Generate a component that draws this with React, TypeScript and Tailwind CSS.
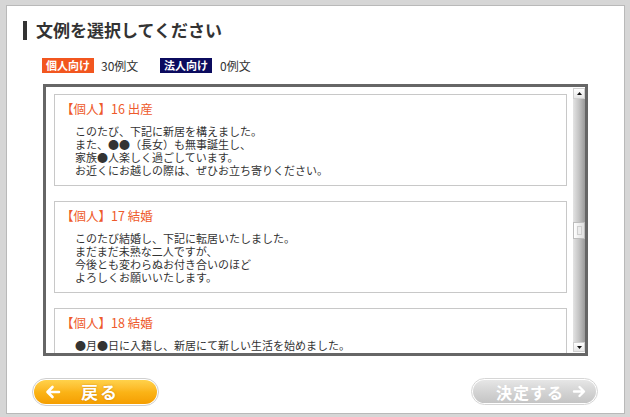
const font = '"Noto Sans CJK JP", "Noto Sans", sans-serif';

interface Sample {
  no: number;
  title: string;
  lines: string[];
}

const samples: Sample[] = [
  {
    no: 16,
    title: '出産',
    lines: [
      'このたび、下記に新居を構えました。',
      'また、●●（長女）も無事誕生し、',
      '家族●人楽しく過ごしています。',
      'お近くにお越しの際は、ぜひお立ち寄りください。',
    ],
  },
  {
    no: 17,
    title: '結婚',
    lines: [
      'このたび結婚し、下記に転居いたしました。',
      'まだまだ未熟な二人ですが、',
      '今後とも変わらぬお付き合いのほど',
      'よろしくお願いいたします。',
    ],
  },
  {
    no: 18,
    title: '結婚',
    lines: [
      '●月●日に入籍し、新居にて新しい生活を始めました。',
      'ふたりで力を合わせて明るい家庭を築いていきたいと思います。',
      'お近くにお越しの際は、ぜひお立ち寄りください。',
    ],
  },
];

function SampleCard({ sample }: { sample: Sample }) {
  return (
    <div className="border border-[#c8c8c8] bg-white pl-[6px] pt-[6px] pb-[8px] shrink-0">
      <div className="text-[12.5px] leading-[16px] text-[#ee5a2b]">
        【個人】{sample.no} {sample.title}
      </div>
      <div className="mt-[8px] pl-[14px] text-[11px] leading-[13px] text-[#333]">
        {sample.lines.map((line) => (
          <div key={line} className="whitespace-nowrap h-[13px]">
            {line}
          </div>
        ))}
      </div>
    </div>
  );
}

function ScrollBar() {
  return (
    <div className="w-[12px] flex flex-col py-[1px] shrink-0">
      <div className="h-[11px] bg-gradient-to-b from-white to-[#e6e6e6] border border-[#d0d0d0] flex items-center justify-center">
        <svg width="5" height="3" viewBox="0 0 5 3">
          <path d="M0 3 L2.5 0 L5 3 Z" fill="#111" />
        </svg>
      </div>
      <div className="flex-1 bg-gradient-to-r from-[#e4e4e4] via-[#c4c4c4] to-[#9a9a9a] flex flex-col">
        <div className="h-[123px]" />
        <div className="h-[17px] bg-gradient-to-r from-white to-[#dedede] border border-[#bdbdbd] flex items-center justify-center">
          <div className="w-[5px] h-[9px] bg-[#ececec] border border-[#cfcfcf]" />
        </div>
      </div>
      <div className="h-[10px] bg-gradient-to-b from-white to-[#e6e6e6] border border-[#d0d0d0] flex items-center justify-center">
        <svg width="5" height="3" viewBox="0 0 5 3">
          <path d="M0 0 L2.5 3 L5 0 Z" fill="#111" />
        </svg>
      </div>
    </div>
  );
}

export default function App() {
  return (
    <div
      className="w-[630px] h-[417px] bg-[#d6d6d6] pl-[6px] pt-[5px] pr-[5px] pb-[3px]"
      style={{ fontFamily: font }}
    >
      <div className="h-full bg-white border border-[#b9b9b9] pt-[14px]">
        <div className="flex items-center ml-[16px] h-[20px]">
          <div className="w-[4px] h-[19px] bg-[#333]" />
          <h1 className="ml-[9px] text-[17px] leading-[20px] font-bold text-[#333]">
            文例を選択してください
          </h1>
        </div>

        <div className="flex items-center ml-[35px] mt-[18px] h-[15px] text-[12px] text-[#333]">
          <div className="flex items-center w-[118px]">
            <span className="bg-[#f2561f] text-white font-bold text-[11px] leading-[15px] px-[4px]">
              個人向け
            </span>
            <span className="ml-[7px]">30例文</span>
          </div>
          <div className="flex items-center">
            <span className="bg-[#0b0b5e] text-white font-bold text-[11px] leading-[15px] px-[4px]">
              法人向け
            </span>
            <span className="ml-[8px]">0例文</span>
          </div>
        </div>

        <div className="ml-[36px] mt-[11px] w-[545px] h-[272px] border-[3px] border-[#666] flex">
          <div className="flex-1 overflow-hidden pl-[8px] pr-[6px] pt-[7px] flex flex-col gap-[15px]">
            {samples.map((s) => (
              <SampleCard key={s.no} sample={s} />
            ))}
          </div>
          <ScrollBar />
        </div>

        <div className="flex justify-between ml-[25px] mr-[26px] mt-[22px]">
          <button className="w-[127px] h-[28px] rounded-full border border-[#cfcfcf] p-[1px] bg-white">
            <div className="h-full rounded-full bg-gradient-to-b from-[#ffd24a] via-[#fbb416] to-[#f59e00] flex items-center pl-[11px] text-white font-bold [text-shadow:0_0_2px_rgba(180,100,0,0.6)]">
              <svg width="16" height="14" viewBox="0 0 16 14">
                <path d="M14 7 H3 M7.5 2 L2.5 7 L7.5 12" stroke="white" strokeWidth="2.6" fill="none" strokeLinecap="round" strokeLinejoin="round" />
              </svg>
              <span className="ml-[20px] text-[17px] leading-[20px] tracking-[2px]">戻る</span>
            </div>
          </button>
          <button className="w-[127px] h-[27px] rounded-full border border-[#d6d6d6] p-[1px] bg-white">
            <div className="h-full rounded-full bg-gradient-to-b from-[#e6e6e6] via-[#d4d4d4] to-[#c4c4c4] flex items-center pl-[23px] text-white font-bold">
              <span className="text-[16px] leading-[20px] tracking-[1px]">決定する</span>
              <svg className="ml-[8px]" width="14" height="13" viewBox="0 0 14 13">
                <path d="M2 6.5 H11.5 M7.5 2 L12 6.5 L7.5 11" stroke="white" strokeWidth="2.4" fill="none" strokeLinecap="round" strokeLinejoin="round" />
              </svg>
            </div>
          </button>
        </div>
      </div>
    </div>
  );
}
